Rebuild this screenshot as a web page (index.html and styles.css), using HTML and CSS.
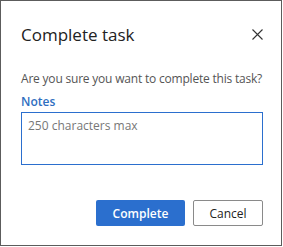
FILE: index.html
```html
<!DOCTYPE html>
<html lang="en">
<head>
  <meta charset="UTF-8">
  <title>Complete task</title>
  <link rel="stylesheet" href="styles.css">
</head>
<body>
  <div class="dialog">
    <div class="dialog-header">
      <h1>Complete task</h1>
      <button class="close" aria-label="Close">
        <svg width="11" height="11" viewBox="0 0 11 11">
          <path d="M0.5 0.5 L10.5 10.5 M10.5 0.5 L0.5 10.5" stroke="#333" stroke-width="1.1" fill="none"/>
        </svg>
      </button>
    </div>
    <p class="question">Are you sure you want to complete this task?</p>
    <label class="notes-label" for="notes">Notes</label>
    <textarea id="notes" placeholder="250 characters max"></textarea>
    <div class="dialog-actions">
      <button class="btn btn-primary">Complete</button>
      <button class="btn btn-secondary">Cancel</button>
    </div>
  </div>
</body>
</html>
```

FILE: styles.css
```css
body {
  margin: 0;
  font-family: "Open Sans", "Noto Sans", sans-serif;
  background: #ffffff;
}

.dialog {
  width: 282px;
  height: 246px;
  box-sizing: border-box;
  border: 1px solid #5c5c5c;
  padding: 0 18px 0 20px;
}

.dialog-header {
  display: flex;
  justify-content: space-between;
  align-items: center;
  margin-top: 22px;
}

.dialog-header h1 {
  margin: 0;
  font-size: 17px;
  font-weight: 500;
  color: #222;
}

.close {
  background: none;
  border: none;
  padding: 0;
  margin-top: -1px;
  display: flex;
  cursor: pointer;
}

.question {
  margin: 24px 0 0;
  font-size: 12px;
  letter-spacing: -0.2px;
  white-space: nowrap;
  color: #555;
}

.notes-label {
  display: block;
  margin: 6px 0 2px;
  font-size: 12px;
  font-weight: 600;
  color: #2f6ebf;
}

textarea {
  display: block;
  width: 242px;
  height: 53px;
  box-sizing: border-box;
  border: 1px solid #2b6fce;
  border-radius: 0;
  padding: 4px 6px;
  font-family: inherit;
  font-size: 12px;
  resize: none;
  outline: none;
}

textarea::placeholder {
  color: #777;
}

.dialog-actions {
  display: flex;
  justify-content: flex-end;
  gap: 8px;
  margin-top: 35px;
  width: 242px;
}

.btn {
  height: 26px;
  font-family: inherit;
  font-size: 12px;
  font-weight: 600;
  border-radius: 2px;
  cursor: pointer;
}

.btn-primary {
  width: 89px;
  background: #2b6fce;
  color: #fff;
  border: none;
}

.btn-secondary {
  width: 70px;
  background: #fff;
  color: #222;
  font-weight: 400;
  border: 1px solid #8a8a8a;
}
```
